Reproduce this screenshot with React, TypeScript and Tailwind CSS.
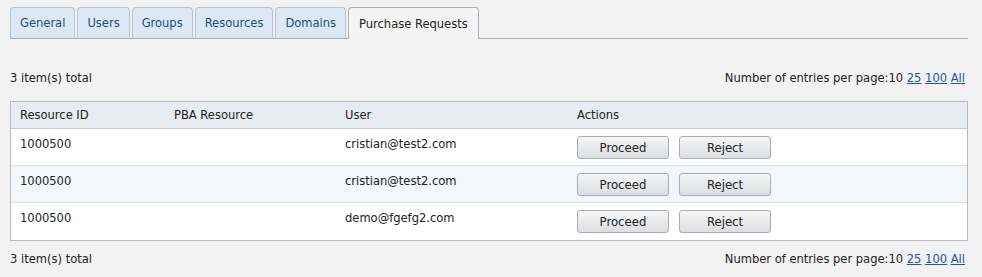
const tabs = ["General", "Users", "Groups", "Resources", "Domains"];

const rows = [
  { id: "1000500", pba: "", user: "cristian@test2.com" },
  { id: "1000500", pba: "", user: "cristian@test2.com" },
  { id: "1000500", pba: "", user: "demo@fgefg2.com" },
];

const Pager = () => (
  <div className="flex items-center justify-between h-4 leading-4 pr-[3px]">
    <span>3 item(s) total</span>
    <span>
      Number of entries per page:10{" "}
      <a href="#" className="text-[#2553a8] underline">25</a>{" "}
      <a href="#" className="text-[#2553a8] underline">100</a>{" "}
      <a href="#" className="text-[#2553a8] underline">All</a>
    </span>
  </div>
);

const Button = ({ label }: { label: string }) => (
  <button className="w-[92px] h-[23px] rounded-[3px] border border-[#a9adb3] bg-gradient-to-b from-[#f6f6f6] to-[#dcdee1] text-[13px] text-[#222] leading-none">
    {label}
  </button>
);

export default function App() {
  return (
    <div
      className="w-[982px] h-[277px] bg-[#f2f2f2] pl-[10px] pr-[14px] pt-[7px] text-[12.8px] text-[#222]"
      style={{ fontFamily: '"DejaVu Sans Condensed", "DejaVu Sans", sans-serif' }}
    >
      <div className="flex gap-[2px] border-b border-[#a7b0bb] h-[32px]">
        {tabs.map((t) => (
          <div
            key={t}
            className="px-[9px] h-[31px] flex items-center rounded-t-[4px] border border-b-0 border-[#b5c4d3] bg-[#dce9f4] text-[#264a7e]"
          >
            {t}
          </div>
        ))}
        <div className="px-[10px] h-[32px] -mb-px flex items-center rounded-t-[4px] border border-b-0 border-[#a7b0bb] bg-[#f4f4f4] text-[#222]">
          Purchase Requests
        </div>
      </div>

      <div className="mt-[31px]">
        <Pager />
      </div>

      <div className="mt-[15px] border border-[#b7bbc1] bg-white">
        <div className="grid grid-cols-[154px_171px_232px_1fr] bg-[#e8ecf2] border-b border-[#c3c9d1] h-[27px] items-center">
          <div className="px-[9px]">Resource ID</div>
          <div className="px-[9px]">PBA Resource</div>
          <div className="px-[9px]">User</div>
          <div className="px-[9px]">Actions</div>
        </div>
        {rows.map((r, i) => (
          <div
            key={i}
            className={`grid grid-cols-[154px_171px_232px_1fr] h-[37px] ${
              i === 1 ? "bg-[#f3f6fa]" : "bg-white"
            } ${i < rows.length - 1 ? "border-b border-[#d5dbe3]" : ""}`}
          >
            <div className="px-[9px] pt-[5px]">{r.id}</div>
            <div className="px-[9px] pt-[5px]">{r.pba}</div>
            <div className="px-[9px] pt-[5px]">{r.user}</div>
            <div className="px-[9px] pt-[7px] flex gap-[10px] items-start">
              <Button label="Proceed" />
              <Button label="Reject" />
            </div>
          </div>
        ))}
      </div>

      <div className="mt-[10px]">
        <Pager />
      </div>
    </div>
  );
}
